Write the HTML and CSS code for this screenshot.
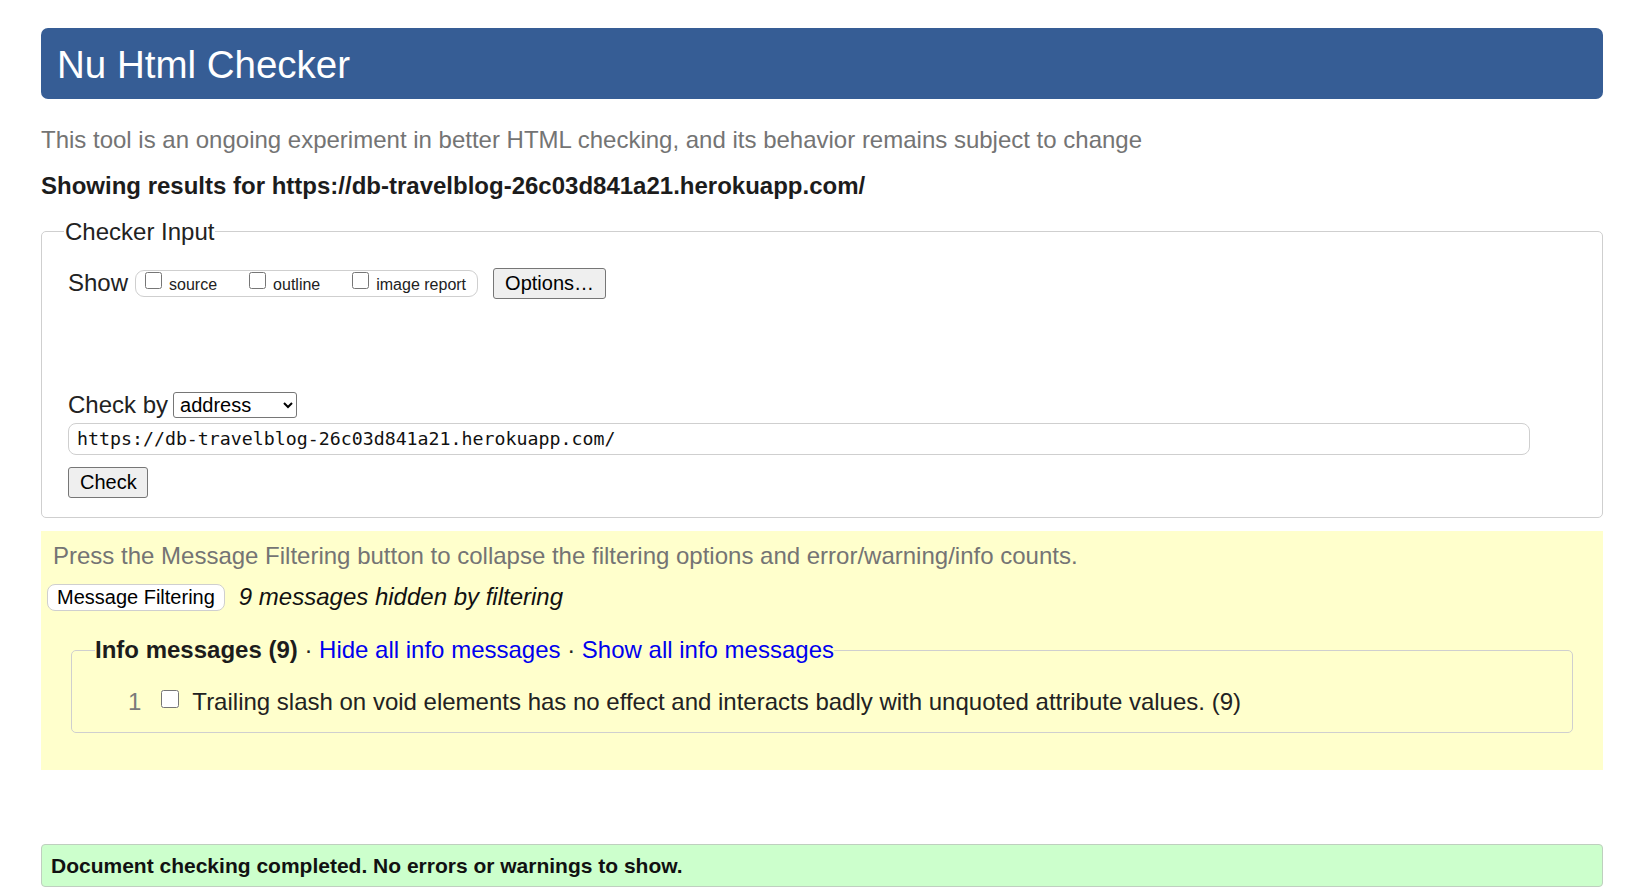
FILE: index.html
```html
<!DOCTYPE html>
<html lang="en">
<head>
<meta charset="utf-8">
<title>Nu Html Checker</title>
<link rel="stylesheet" href="styles.css">
</head>
<body>
<div class="page">
  <h1 class="banner">Nu Html Checker</h1>
  <p class="about">This tool is an ongoing experiment in better HTML checking, and its behavior remains subject to change</p>
  <p class="results-for">Showing results for https://db-travelblog-26c03d841a21.herokuapp.com/</p>

  <form class="checker-form">
    <fieldset class="checker">
      <legend>Checker Input</legend>
      <div class="show-row">
        <span class="show-label">Show</span>
        <span class="show-group">
          <label class="opt"><input type="checkbox">source</label>
          <label class="opt"><input type="checkbox">outline</label>
          <label class="opt"><input type="checkbox">image report</label>
        </span>
        <button type="button" class="btn options">Options…</button>
      </div>
      <div class="checkby-row">
        <span class="checkby-label">Check by</span>
        <select class="checkby-select"><option>address</option></select>
      </div>
      <input class="url" type="text" value="https://db-travelblog-26c03d841a21.herokuapp.com/">
      <div class="submit-row"><button type="button" class="btn check">Check</button></div>
    </fieldset>
  </form>

  <section class="filters">
    <p class="press">Press the Message Filtering button to collapse the filtering options and error/warning/info counts.</p>
    <div class="filter-row">
      <button type="button" class="filter-btn">Message Filtering</button>
      <em class="hidden-count">9 messages hidden by filtering</em>
    </div>
    <fieldset class="info">
      <legend><strong>Info messages (9)</strong> · <a href="#">Hide all info messages</a> · <a href="#">Show all info messages</a></legend>
      <ol class="msg-list">
        <li class="msg"><span class="num">1</span><input type="checkbox"><span class="msg-text">Trailing slash on void elements has no effect and interacts badly with unquoted attribute values. (9)</span></li>
      </ol>
    </fieldset>
  </section>

  <div class="success">Document checking completed. No errors or warnings to show.</div>
</div>
</body>
</html>
```

FILE: styles.css
```css
html, body {
  margin: 0;
  padding: 0;
  background: #fff;
}

body {
  font-family: "Liberation Sans", Arial, sans-serif;
  color: #222;
  font-size: 24px;
}

.page {
  padding: 28px 38px 0 41px;
}

.banner {
  margin: 0;
  height: 71px;
  line-height: 73px;
  background: #365d95;
  color: #fff;
  border-radius: 7px;
  font-size: 38.5px;
  font-weight: normal;
  padding-left: 16px;
  overflow: hidden;
}

.about {
  margin: 27px 0 0 0;
  color: #747474;
  line-height: 1.15;
}

.results-for {
  margin: 18px 0 0 0;
  font-weight: bold;
  color: #1c1c1c;
  line-height: 1.15;
}

.checker-form {
  margin: 19px 0 0 0;
}

.checker {
  margin: 0;
  padding: 0 26px 19px 26px;
  border: 1px solid #cfcfcf;
  border-radius: 5px;
  min-inline-size: 0;
}

.checker legend {
  padding: 0 1px;
  margin-left: -4px;
  line-height: 1.15;
  color: #222;
}

.show-row {
  display: flex;
  align-items: center;
  height: 31px;
  margin-top: 22px;
}

.show-label {
  line-height: 1;
}

.show-group {
  display: flex;
  align-items: center;
  margin-left: 7px;
  height: 25px;
  padding: 0 11px 0 9px;
  border: 1px solid #cfcfcf;
  border-radius: 9px;
  font-size: 16px;
}

.opt {
  display: flex;
  align-items: center;
  margin-right: 32px;
  line-height: 1;
  padding-top: 3px;
}

.opt:last-child {
  margin-right: 0;
}

.opt input {
  width: 17px;
  height: 17px;
  margin: -9px 7px 0 0;
}

.btn {
  font-family: "Liberation Sans", Arial, sans-serif;
  font-size: 20px;
  color: #000;
  background: #efefef;
  border: 1px solid #767676;
  border-radius: 3px;
  padding: 0 11px;
  height: 31px;
}

.options {
  margin-left: 15px;
  width: 113px;
}

.checkby-row {
  display: flex;
  align-items: center;
  height: 28px;
  margin-top: 92px;
}

.checkby-select {
  margin-left: 5px;
  width: 124px;
  height: 26px;
  font-family: "Liberation Sans", Arial, sans-serif;
  font-size: 20px;
  color: #000;
  border: 1px solid #767676;
  border-radius: 3px;
  background: #fff;
  padding: 0 2px;
}

.url {
  display: block;
  box-sizing: border-box;
  margin-top: 4px;
  width: 1462px;
  height: 32px;
  padding: 0 8px;
  border: 1px solid #cfcfcf;
  border-radius: 8px;
  font-family: "DejaVu Sans Mono", "Liberation Mono", monospace;
  font-size: 18.25px;
  color: #111;
  background: #fff;
}

.submit-row {
  margin-top: 12px;
  display: flex;
}

.check {
  width: 80px;
}

.filters {
  margin-top: 13px;
  background: #ffffcc;
  padding: 11px 30px 37px 6px;
}

.press {
  margin: 0 0 0 6px;
  color: #747474;
  line-height: 1.15;
}

.filter-row {
  display: flex;
  align-items: center;
  height: 28px;
  margin-top: 14px;
}

.filter-btn {
  font-family: "Liberation Sans", Arial, sans-serif;
  font-size: 20px;
  color: #000;
  background: #fff;
  border: 1px solid #cfcfcf;
  border-radius: 8px;
  height: 27px;
  padding: 0 9px;
}

.hidden-count {
  margin-left: 14px;
  color: #111;
}

.info {
  margin: 25px 0 0 24px;
  padding: 0 20px 16px 23px;
  border: 1px solid #cfcfcf;
  border-radius: 5px;
  min-inline-size: 0;
}

.info legend {
  padding: 0;
  line-height: 1.15;
  color: #222;
}

.info legend strong {
  color: #1c1c1c;
}

.info legend a {
  color: #0000ee;
  text-decoration: none;
}

.msg-list {
  list-style: none;
  margin: 24px 0 0 0;
  padding: 0;
}

.msg {
  display: flex;
  align-items: center;
  height: 28px;
}

.num {
  margin-left: 33px;
  color: #7a7a7a;
}

.msg input {
  width: 18px;
  height: 18px;
  margin: -6px 0 0 20px;
}

.msg-text {
  margin-left: 13px;
  color: #222;
}

.success {
  margin-top: 74px;
  background: #ccffcc;
  border: 1px solid #bfcfbf;
  border-radius: 4px;
  height: 41px;
  line-height: 41px;
  padding-left: 9px;
  font-size: 21px;
  font-weight: bold;
  color: #111;
}
```
